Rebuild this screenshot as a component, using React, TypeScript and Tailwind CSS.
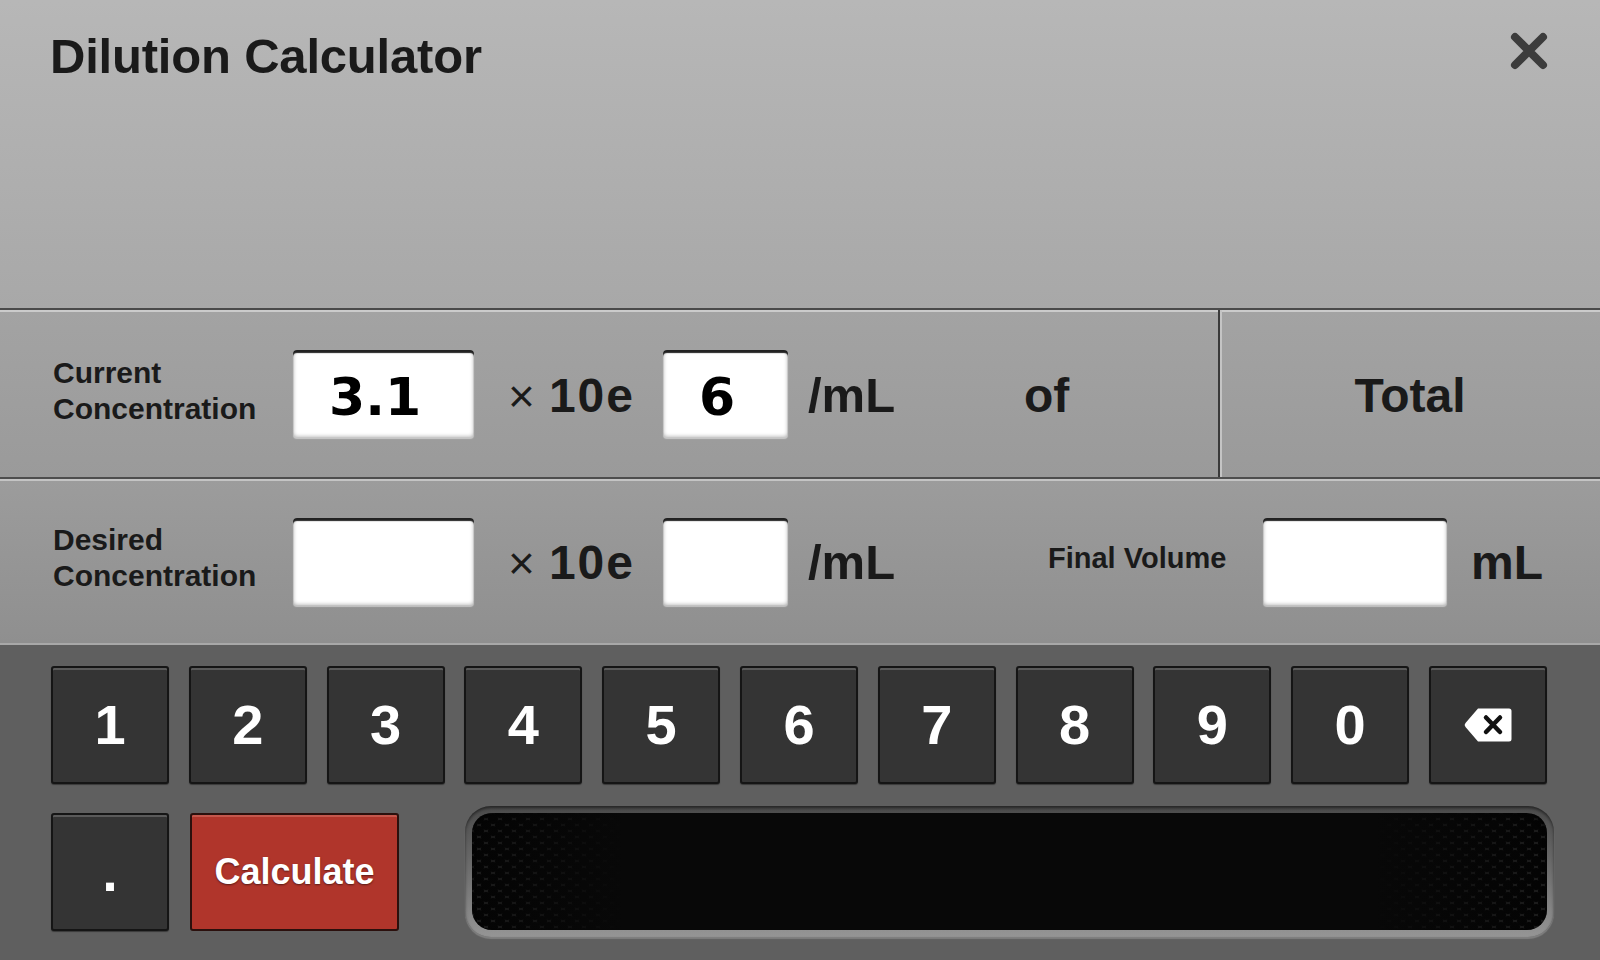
import React from 'react';

const digits = ['1', '2', '3', '4', '5', '6', '7', '8', '9', '0'];

function Field({ value, width }: { value?: string; width: string }) {
  return (
    <div
      className={`${width} h-[87px] shrink-0 bg-white rounded-[4px] flex items-center pl-[36px] pt-[6px] font-['DejaVu_Sans',sans-serif] font-bold text-[52px] text-black shadow-[inset_0_3px_1px_rgba(0,0,0,0.85),inset_0_0_4px_rgba(0,0,0,0.35),0_2px_1px_rgba(255,255,255,0.45)]`}
    >
      {value}
    </div>
  );
}

function Label({ top, bottom }: { top: string; bottom: string }) {
  return (
    <div className="w-[240px] shrink-0 text-[30px] leading-[36px] font-bold text-[#1a1a1a] mb-[6px]">
      <div>{top}</div>
      <div>{bottom}</div>
    </div>
  );
}

function Exponent() {
  return (
    <div className="w-[189px] shrink-0 pl-[34px] flex items-baseline text-[#1a1a1a] pt-[4px]">
      <span className="text-[46px] font-normal mr-[14px]">×</span>
      <span className="text-[48px] font-bold tracking-[2px]">10e</span>
    </div>
  );
}

function Key({ children }: { children: React.ReactNode }) {
  return (
    <button className="w-[118px] h-[118px] shrink-0 bg-[#343434] border-2 border-[#151515] rounded-[3px] shadow-[inset_0_2px_0_#5a5a5a,0_1px_1px_rgba(0,0,0,0.4)] flex items-center justify-center text-white text-[56px] font-bold">
      {children}
    </button>
  );
}

function BackspaceIcon() {
  return (
    <svg width="50" height="36" viewBox="0 0 50 36">
      <path d="M15 1.5 H46 a2.5 2.5 0 0 1 2.5 2.5 V32 a2.5 2.5 0 0 1 -2.5 2.5 H15 L2.5 20 a3 3 0 0 1 0 -4 Z" fill="#fff" />
      <path d="M23 10.5 L37 25 M37 10.5 L23 25" stroke="#111" strokeWidth="4.5" strokeLinecap="round" />
    </svg>
  );
}

export default function App() {
  return (
    <div className="w-[1600px] h-[960px] flex flex-col overflow-hidden font-['Liberation_Sans',Arial,sans-serif] select-none">
      {/* header */}
      <div className="h-[308px] shrink-0 bg-linear-to-b from-[#b7b7b7] to-[#a8a8a8] flex justify-between items-start pl-[50px] pr-[52px]">
        <h1 className="pt-[32px] text-[49px] leading-none font-bold text-[#1a1a1a] tracking-[-0.2px]">Dilution Calculator</h1>
        <svg width="38" height="38" viewBox="0 0 38 38" className="mt-[32px]">
          <path d="M5 5 L33 33 M33 5 L5 33" stroke="#3c3c3c" strokeWidth="8" strokeLinecap="round" />
        </svg>
      </div>

      {/* current concentration */}
      <div className="h-[169px] shrink-0 flex border-t-2 border-[#4a4a4a] bg-linear-to-b from-[#a3a3a3] to-[#9a9a9a] shadow-[inset_0_2px_0_#cbcbcb]">
        <div className="w-[1218px] shrink-0 flex items-center pl-[53px] text-[#1a1a1a]">
          <Label top="Current" bottom="Concentration" />
          <Field value="3.1" width="w-[181px]" />
          <Exponent />
          <Field value="6" width="w-[125px]" />
          <span className="ml-[20px] w-[90px] text-[49px] font-bold pt-[4px]">/mL</span>
          <span className="ml-[126px] text-[48px] font-bold pt-[4px]">of</span>
        </div>
        <div className="flex-1 flex items-center justify-center border-l-2 border-[#3a3a3a] shadow-[inset_2px_0_0_#c4c4c4,inset_0_2px_0_#cbcbcb] text-[48px] font-bold text-[#1a1a1a] pt-[4px]">
          Total
        </div>
      </div>

      {/* desired concentration */}
      <div className="h-[166px] shrink-0 flex items-center pl-[53px] border-t-2 border-[#4e4e4e] bg-linear-to-b from-[#9c9c9c] to-[#8f8f8f] shadow-[inset_0_2px_0_#c4c4c4] text-[#1a1a1a]">
        <Label top="Desired" bottom="Concentration" />
        <Field width="w-[181px]" />
        <Exponent />
        <Field width="w-[125px]" />
        <span className="ml-[20px] w-[90px] text-[49px] font-bold pt-[4px]">/mL</span>
        <span className="ml-[150px] w-[215px] text-[29px] font-bold mb-[4px]">Final Volume</span>
        <Field width="w-[184px]" />
        <span className="ml-[24px] text-[48px] font-bold pt-[4px]">mL</span>
      </div>

      {/* keypad */}
      <div className="flex-1 bg-[#5f5f5f] border-t-2 border-[#a8a8a8] pt-[21px] pl-[51px]">
        <div className="flex gap-[19.8px]">
          {digits.map((d) => (
            <Key key={d}>{d}</Key>
          ))}
          <Key>
            <BackspaceIcon />
          </Key>
        </div>

        <div className="flex items-center mt-[22px]">
          <Key>.</Key>
          <button className="ml-[21px] w-[209px] h-[118px] shrink-0 bg-[#b0352b] border-2 border-[#2b100d] rounded-[3px] shadow-[inset_0_2px_0_#c4574c] text-white text-[36px] font-bold [text-shadow:0_1px_2px_rgba(0,0,0,0.5)]">
            Calculate
          </button>
          <div className="ml-[66px] w-[1089px] h-[131px] shrink-0 rounded-[26px] p-[7px] bg-linear-to-b from-[#4a4a4a] to-[#959595] shadow-[inset_0_2px_3px_rgba(0,0,0,0.5),0_2px_1px_rgba(255,255,255,0.2)]">
            <div className="relative w-full h-full rounded-[20px] overflow-hidden bg-[#262626] [background-image:radial-gradient(circle,#020202_0,#020202_4.5px,transparent_5.5px),radial-gradient(circle,#020202_0,#020202_4.5px,transparent_5.5px)] [background-size:14px_12px] [background-position:0_0,7px_6px] shadow-[inset_0_3px_4px_rgba(0,0,0,0.9)]">
              <div className="absolute inset-0 bg-[linear-gradient(90deg,rgba(8,8,8,0.35)_0%,#080808_14%,#080808_84%,rgba(8,8,8,0.3)_100%)]" />
            </div>
          </div>
        </div>
      </div>
    </div>
  );
}
